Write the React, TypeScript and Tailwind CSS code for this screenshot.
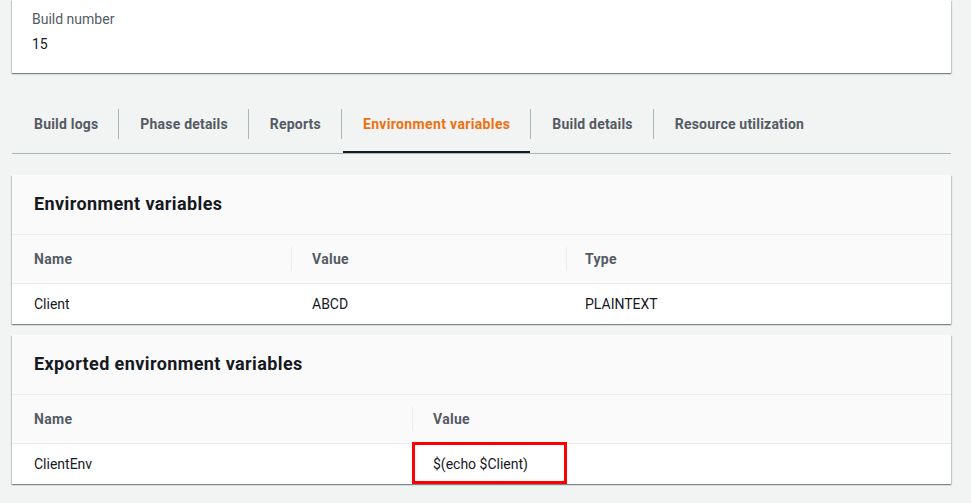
import React from "react";

const tabs = [
  "Build logs",
  "Phase details",
  "Reports",
  "Environment variables",
  "Build details",
  "Resource utilization",
];

const cardShadow =
  "shadow-[0_1px_1px_0_rgba(0,28,36,0.3),1px_1px_1px_0_rgba(0,28,36,0.15),-1px_1px_1px_0_rgba(0,28,36,0.15)]";

function Card({ children }: { children: React.ReactNode }) {
  return <div className={`bg-white ${cardShadow}`}>{children}</div>;
}

export default function App() {
  return (
    <div
      className="min-h-[503px] w-full bg-[#f2f3f3] pl-3 pr-5 text-[14px] text-[#16191f]"
      style={{ fontFamily: "Roboto, 'Liberation Sans', sans-serif" }}
    >
      {/* Top summary card (cut off at top) */}
      <div className={`bg-white ${cardShadow} h-[73px] pl-5 pt-[8px]`}>
        <div className="text-[14px] leading-[22px] text-[#545b64]">Build number</div>
        <div className="mt-[3px] text-[14px] leading-[22px] text-[#16191f]">15</div>
      </div>

      {/* Tabs */}
      <div className="mt-[36px] flex border-b border-[#aab7b8]">
        {tabs.map((t, i) => {
          const active = i === 3;
          return (
            <div key={t} className="flex">
              {i > 0 && <div className="mt-0 h-[30px] w-px bg-[#aab7b8]" />}
              <div className="flex flex-col">
                <div
                  className={`flex h-[30px] items-center ${i === 0 ? "pl-[22px]" : "pl-[21px]"} pr-5 text-[14px] font-bold ${
                    active ? "tracking-[0.35px] text-[#ec7211]" : "tracking-[0.2px] text-[#545b64]"
                  }`}
                >
                  {t}
                </div>
                <div className={`mt-[12px] h-[2px] ${active ? "ml-px bg-[#16191f]" : "bg-transparent"}`} />
              </div>
            </div>
          );
        })}
      </div>

      {/* Environment variables card */}
      <div className="mt-[21px]">
        <Card>
          <div className="flex h-[60px] items-center border-b border-[#eaeded] bg-[#fafafa] pl-[22px] pb-[2px] text-[18px] font-bold tracking-[0.4px] text-[#16191f]">
            Environment variables
          </div>
          <div className="flex h-[49px] items-center border-b border-[#eaeded] bg-[#fafafa] text-[14px] font-bold tracking-[0.3px] text-[#545b64]">
            <div className="w-[279px] pl-[22px]">Name</div>
            <div className="flex w-[275px] items-center">
              <div className="h-[24px] w-px bg-[#eaeded]" />
              <div className="pl-5">Value</div>
            </div>
            <div className="flex flex-1 items-center">
              <div className="h-[24px] w-px bg-[#eaeded]" />
              <div className="pl-[18px]">Type</div>
            </div>
          </div>
          <div className="flex h-[40px] items-center bg-white text-[14px] text-[#16191f]">
            <div className="w-[279px] pl-[22px]">Client</div>
            <div className="w-[275px] pl-[21px]">ABCD</div>
            <div className="flex-1 pl-[19px]">PLAINTEXT</div>
          </div>
        </Card>
      </div>

      {/* Exported environment variables card */}
      <div className="mt-[11px]">
        <Card>
          <div className="flex h-[60px] items-center border-b border-[#eaeded] bg-[#fafafa] pl-[22px] pb-[2px] text-[18px] font-bold tracking-[0.4px] text-[#16191f]">
            Exported environment variables
          </div>
          <div className="flex h-[49px] items-center border-b border-[#eaeded] bg-[#fafafa] text-[14px] font-bold tracking-[0.3px] text-[#545b64]">
            <div className="w-[400px] pl-[22px]">Name</div>
            <div className="flex flex-1 items-center">
              <div className="h-[24px] w-px bg-[#eaeded]" />
              <div className="pl-5">Value</div>
            </div>
          </div>
          <div className="flex h-[40px] items-center bg-white text-[14px] text-[#16191f]">
            <div className="w-[400px] pl-[22px]">ClientEnv</div>
            <div className="relative flex h-full flex-1 items-center pl-[21px]">
              $(echo $Client)
              <div className="absolute left-0 top-[-2px] h-[42px] w-[155px] border-[3px] border-[#ff0000]" />
            </div>
          </div>
        </Card>
      </div>
    </div>
  );
}
